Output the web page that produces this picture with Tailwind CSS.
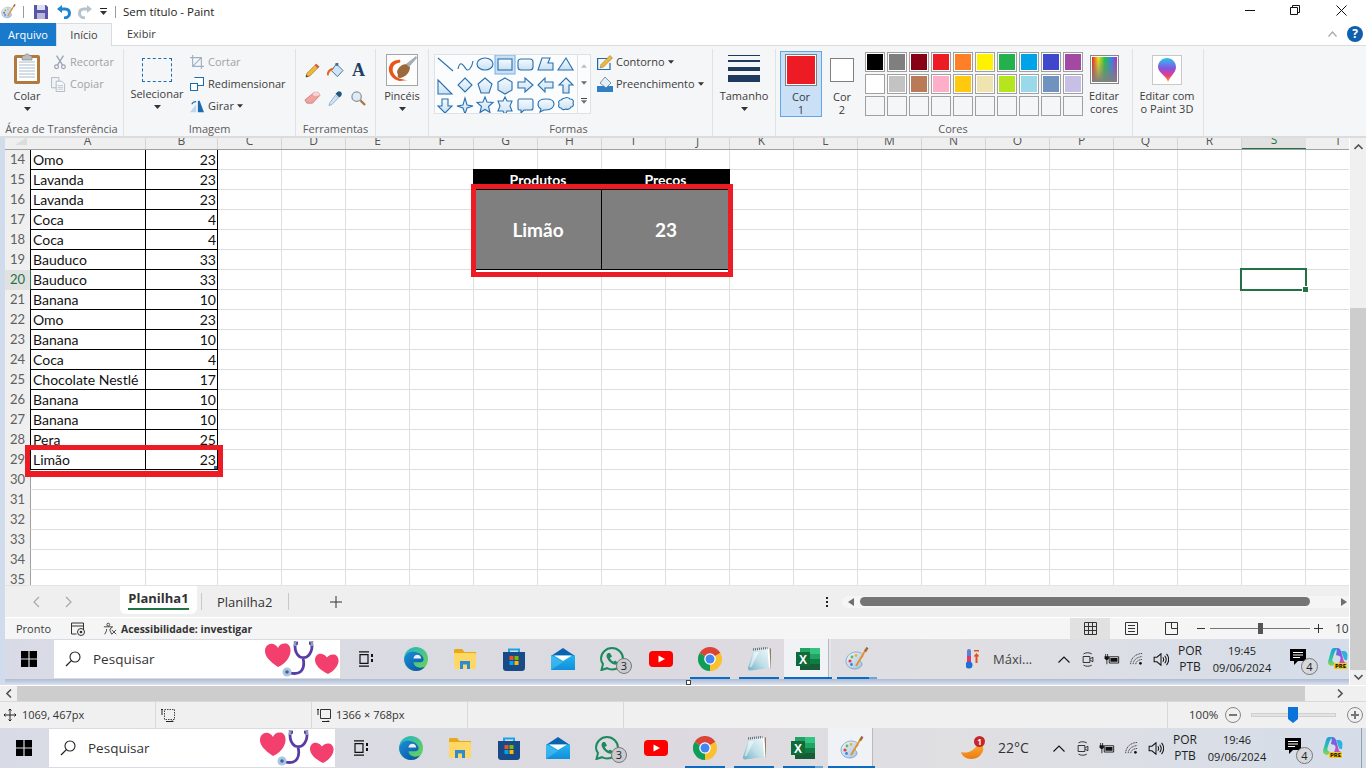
<!DOCTYPE html>
<html lang="pt-BR">
<head>
<meta charset="UTF-8">
<title>Sem título - Paint</title>
<script src="https://cdn.jsdelivr.net/npm/@tailwindcss/browser@4"></script>
</head>
<body class="w-[1366px] h-[768px] overflow-hidden flex flex-col bg-white text-[#3c3c3c] text-[11px] leading-[14px] font-['Open_Sans',sans-serif]">

<!-- icon sprites -->
<svg class="absolute w-0 h-0">
  <defs>
    <linearGradient id="gEdge" x1="0" y1="0" x2="1" y2="1"><stop offset="0" stop-color="#1fb3c8"/><stop offset="1" stop-color="#6fd64f"/></linearGradient>
    <linearGradient id="gEdge2" x1="0" y1="0" x2="1" y2="1"><stop offset="0" stop-color="#1a8fd8"/><stop offset="1" stop-color="#0c4f9c"/></linearGradient>
    <linearGradient id="gMail" x1="0" y1="0" x2="0" y2="1"><stop offset="0" stop-color="#26b3ee"/><stop offset="1" stop-color="#0f8fdc"/></linearGradient>
    <linearGradient id="gPal" x1="0" y1="0" x2="1" y2="1"><stop offset="0" stop-color="#eef5fb"/><stop offset="1" stop-color="#9fc3e4"/></linearGradient>
    <linearGradient id="gNote" x1="1" y1="0" x2="0" y2="1"><stop offset="0" stop-color="#eef7f9"/><stop offset=".5" stop-color="#c2e0e8"/><stop offset="1" stop-color="#6fb2c9"/></linearGradient>
    <linearGradient id="gSpec" x1="0" y1="0" x2="1" y2="0"><stop offset="0" stop-color="#e81c24"/><stop offset=".25" stop-color="#f5e611"/><stop offset=".5" stop-color="#27c43c"/><stop offset=".75" stop-color="#1f8ee8"/><stop offset="1" stop-color="#c026c8"/></linearGradient>
    <linearGradient id="gSpecD" x1="0" y1="0" x2="0" y2="1"><stop offset="0" stop-color="#808080" stop-opacity="0"/><stop offset="1" stop-color="#808080"/></linearGradient>
    <linearGradient id="g3d" x1="0" y1="0" x2="0" y2="1"><stop offset="0" stop-color="#27c4ee"/><stop offset=".45" stop-color="#8a4fe0"/><stop offset=".75" stop-color="#ee3f7a"/><stop offset="1" stop-color="#f7a11d"/></linearGradient>
    <linearGradient id="gCopA" x1="0" y1="0" x2="0" y2="1"><stop offset="0" stop-color="#1f9fe0"/><stop offset=".6" stop-color="#2fc4a0"/><stop offset="1" stop-color="#9ad54a"/></linearGradient>
    <linearGradient id="gCopB" x1="0" y1="0" x2="1" y2="1"><stop offset="0" stop-color="#3f7fe8"/><stop offset=".5" stop-color="#a04fd8"/><stop offset="1" stop-color="#ee5fa8"/></linearGradient>
    <linearGradient id="gSun" x1="0" y1="0" x2="0" y2="1"><stop offset="0" stop-color="#f9b233"/><stop offset="1" stop-color="#ee7a12"/></linearGradient>
    <linearGradient id="gFill" x1="0" y1="0" x2="0" y2="1"><stop offset="0" stop-color="#f7fbff"/><stop offset="1" stop-color="#c9e0f2"/></linearGradient>
    <symbol id="win" viewBox="0 0 16 16"><path fill="#000" d="M0 0h7.4v7.4H0zM8.6 0H16v7.4H8.6zM0 8.6h7.4V16H0zM8.6 8.6H16V16H8.6z"/></symbol>
    <symbol id="lens" viewBox="0 0 16 16"><circle cx="10" cy="6" r="5" fill="none" stroke="#222" stroke-width="1.1"/><path d="M6.4 9.6 1 15" stroke="#222" stroke-width="1.3"/></symbol>
    <symbol id="hearts" viewBox="0 0 75 38">
      <path fill="#f23f6d" d="M14 27C5 21 1 16 1 11 1 6 5 3 9 4c2 .5 4 2 5 4 1-3 4-5 8-4.400 3 .6 5 4 4.500 8C26 18 21 24 14 27z"/>
      <path fill="#f23f6d" d="M64 34C56 30 51 25 51 20c0-4 3-7 7-6 2 .4 4 2 5 3.500 1-2 4-3.500 7-3 3 .6 5 3.500 4.500 7C74 26 70 31 64 34z"/>
      <path fill="none" stroke="#5a3ca6" stroke-width="2.800" d="M34 3c-2 0-3 1-3 3 0 5 2 9 5 11 3 1 6 1 8-1 3-3 4-7 4-10 0-2-1-3-3-3M39 18c1 4 1 9-1 12-2 3-7 4-12 3"/>
      <circle cx="23" cy="32" r="4.500" fill="#a9c6e4"/><circle cx="23" cy="32" r="1.800" fill="#47648e"/>
      <path stroke="#8d9bb8" stroke-width="2.600" d="M31 1v5M48 1v5"/>
    </symbol>
    <symbol id="taskview" viewBox="0 0 16 16"><path fill="none" stroke="#111" stroke-width="1.200" d="M1 .8h10M1 15.200h10M2 3.600h8v8.800H2z"/><path fill="#111" d="M13 3h2v3h-2zM13 8h2v3h-2z"/></symbol>
    <symbol id="edge" viewBox="0 0 24 24">
      <circle cx="12" cy="12" r="12" fill="url(#gEdge)"/>
      <path fill="url(#gEdge2)" d="M.2 12.500C1 7 5 4.500 9.500 4.800c5 .3 9 3 10 6.700.5 2.500-1 3.800-3.500 3.800H9.500c.2 3.500 3.500 5.500 7 5.400 1.700 0 3.300-.5 4.500-1.200C18.800 22.800 15.500 24 12 24 5.500 24 .5 18.500.2 12.500z"/>
      <path fill="#fff" opacity=".9" d="M9.400 11.500c.2-2.300 2-3.800 4-3.800 2 0 3.700 1.400 3.800 3.800z"/>
    </symbol>
    <symbol id="folder" viewBox="0 0 22 20"><path fill="#e8a917" d="M0 1.500C0 .7.700 0 1.500 0H8l2.500 3H22v3H0z"/><path fill="#fdd866" d="M0 4h20.500c.8 0 1.500.7 1.500 1.500V18.500c0 .8-.7 1.500-1.500 1.500h-19C.7 20 0 19.300 0 18.500z"/><path fill="#2e8bd0" d="M6 12h10v8h-3v-4.500H9V20H6z"/></symbol>
    <symbol id="store" viewBox="0 0 24 24"><path fill="none" stroke="#1aa5e8" stroke-width="2" d="M7 6V2.500h10V6"/><path fill="#174a86" d="M1 5h22v16c0 1.700-1.300 3-3 3H4c-1.700 0-3-1.300-3-3z"/><path fill="#f25022" d="M7.500 9h4v4h-4z"/><path fill="#7fba00" d="M12.500 9h4v4h-4z"/><path fill="#00a4ef" d="M7.500 14h4v4h-4z"/><path fill="#ffb900" d="M12.500 14h4v4h-4z"/></symbol>
    <symbol id="mail" viewBox="0 0 24 22"><path fill="#0a63b0" d="M12 0 0 8h24z"/><path fill="url(#gMail)" d="M0 7.500h24V22H0z"/><path fill="#fff" d="M3 7.500h18L12 13z"/><path fill="#55c7f5" d="M0 7.500 12 14 0 22z" opacity=".5"/></symbol>
    <symbol id="wa" viewBox="0 0 24 24"><path fill="none" stroke="#1c8a5c" stroke-width="2" d="M1.500 23 3 17C1.800 15.300 1 13.600 1 11.700 1 6 6 1 12 1s11 5 11 10.700-5 10.800-11 10.800c-1.800 0-3.600-.5-5-1.300z"/><path fill="#1c8a5c" d="M8 6c-1.500 1-2 3-1 5 1.500 3 4 5.500 7 6.500 2 .5 3.500-.5 4-2l-3-2-1.500 1.200c-1.500-.7-3-2.200-3.700-3.700L12 9.500 10 6z"/></symbol>
    <symbol id="yt" viewBox="0 0 24 16"><rect width="24" height="16" rx="4" fill="#f00"/><path fill="#fff" d="m9.500 4.500 6.500 3.500-6.500 3.500z"/></symbol>
    <symbol id="chrome" viewBox="0 0 24 24">
      <path fill="#db4437" d="M12 12 1.600 6A12 12 0 0 1 22.400 6z"/><path fill="#0f9d58" d="M12 12 1.600 6A12 12 0 0 0 12 24z"/><path fill="#fbc02d" d="M12 12 22.400 6A12 12 0 0 1 12 24z"/>
      <circle cx="12" cy="12" r="5.800" fill="#fff"/><circle cx="12" cy="12" r="4.500" fill="#4285f4"/>
    </symbol>
    <symbol id="notepad" viewBox="0 0 24 24">
      <path fill="#8f7c60" d="M21 1l3 .5 0 19-1 .5z"/>
      <path fill="#fff" d="M20 1.500 22.500 1 23.500 20.500 21 21z"/>
      <path fill="url(#gNote)" d="M6 3 20.500 1.500 22 21 3 23.500c-1.500 0-2.500-1.500-2-3C3 15 5 9 6 3z"/>
      <path fill="none" stroke="#66707a" stroke-width="2.400" stroke-dasharray="1 1" d="M6 2.500 20.500 1"/>
      <path fill="#fff" opacity=".5" d="M7 5h5L4.500 20H2.500z"/>
    </symbol>
    <symbol id="excel" viewBox="0 0 24 22">
      <path fill="#21a366" d="M4 0h20v6H4z"/><path fill="#33c481" d="M14 0h10v6H14z"/><path fill="#21a366" d="M14 6h10v5H14z"/><path fill="#107c41" d="M4 6h10v5H4zM14 11h10v5H14z"/><path fill="#185c37" d="M4 11h10v11H4zM14 16h10v6H14z"/>
      <rect y="4" width="14" height="14" fill="#0f6b3a"/>
      <text x="3" y="15.500" font-family="Liberation Sans" font-weight="700" font-size="12" fill="#fff">X</text>
    </symbol>
    <symbol id="palette" viewBox="0 0 24 24">
      <path fill="url(#gPal)" stroke="#6e94b8" stroke-width=".7" d="M1 14c0-5 5-9 10-9 3 0 7 1 7 4 0 2-3 2-3 4s2 2 2 4c0 3-4 5-7 5-5 0-9-3-9-8z"/>
      <circle cx="5" cy="14" r="1.600" fill="#e8413a"/><circle cx="7" cy="10" r="1.400" fill="#6cba4a"/><circle cx="11" cy="8.500" r="1.400" fill="#f0b52d"/><circle cx="6.500" cy="17.500" r="1.400" fill="#3d86d6"/>
      <path stroke="#e89024" stroke-width="1.800" d="M11 19 20 4"/><path stroke="#a06a3c" stroke-width="2.400" d="M20 4.500 22.500 .5"/>
    </symbol>
    <symbol id="cam" viewBox="0 0 16 20"><path fill="none" stroke="#111" stroke-width="1.100" d="M2 2.500c3-2 8-2 11 0M2 17.500c3 2 8 2 11 0M1.500 6h9v8h-9zM11 9l3.500-2v6L11 11"/></symbol>
    <symbol id="batt" viewBox="0 0 20 14"><path fill="none" stroke="#111" stroke-width="1.100" d="M6.500 3.500h12v8h-12z"/><path fill="#111" d="M8 5h9v5H8zM1.500 0h1v3h-1zM4 0h1v3H4zM.5 3h5.500v3L4 8v5H3V8L.5 6z"/></symbol>
    <symbol id="wifi" viewBox="0 0 16 14"><path fill="none" stroke="#333" stroke-width="1" stroke-dasharray="1.500 .6" d="M.5 13C1 6 6 1 14 .5M3.500 13c.5-5 4-8 10.500-9M6.500 13c.5-3 2.500-5 7.500-5.500"/><circle cx="12" cy="12" r="1.600" fill="#111"/></symbol>
    <symbol id="spk" viewBox="0 0 16 14"><path fill="none" stroke="#111" stroke-width="1.100" d="M.6 4.500h3L8 .8v12.400L3.600 9.500h-3zM10 4.500c1 1.500 1 3.500 0 5M12 3c2 2.500 2 5.500 0 8M14 1c3 3.500 3 8.500 0 12"/></symbol>
    <symbol id="chat" viewBox="0 0 16 16"><path fill="#000" d="M0 0h16v12H8l-4 4v-4H0z"/><path stroke="#fff" d="M3 3.500h10M3 6h10M3 8.500h7"/></symbol>
    <symbol id="copilot" viewBox="0 0 20 18">
      <path fill="url(#gCopA)" d="M6 0h5c-3 1-4 3-5 6L4.500 11c-.6 2 .5 3.500 2.500 4-1 2-2 3-3 3-2.500 0-4.500-2-3.800-5L3 3C3.500 1 4.500 0 6 0z"/>
      <path fill="url(#gCopB)" d="M9 0c2 0 3.500 1 4 3l2.500 9c.5 2 1.500 3 3.500 3l-1 1c-1 1.500-2 2-3.500 2H7c3 0 4-2 4.500-4l1-3c.5-2-1-3.500-3-3.500L8 7c1-4 .5-6 1-7z" />
      <path fill="#2ab4e0" d="M13 3h3c2 0 3.500 2 3.500 4.500L19 12c-2 .5-3-.5-3.500-2.500z"/>
    </symbol>
    <symbol id="caret" viewBox="0 0 7 4"><path fill="#333" d="M0 0h7L3.500 4z"/></symbol>
    <symbol id="clip" viewBox="0 0 26 32"><rect y="3" width="26" height="29" rx="2" fill="#b2793e"/><rect x="3" y="6" width="20" height="23" fill="#fff"/><path stroke="#a9bcd0" d="M5 10h16M5 13h16M5 16h16M5 19h16M5 22h16M5 25h16"/><path fill="#bcbcbc" stroke="#777" stroke-width=".6" d="M8 5c0-1 1-1.500 2.500-1.500.5-2 4.500-2 5 0C17 3.500 18 4 18 5v3H8z"/></symbol>
    <symbol id="scis" viewBox="0 0 14 16"><path fill="none" stroke="#9aa5b5" stroke-width="1.600" d="M3 0l7 11M11 0 4 11"/><circle cx="3" cy="13" r="2.200" fill="none" stroke="#9aa5b5" stroke-width="1.400"/><circle cx="11" cy="13" r="2.200" fill="none" stroke="#9aa5b5" stroke-width="1.400"/></symbol>
    <symbol id="copy" viewBox="0 0 16 16"><path fill="#f0f3f6" stroke="#aeb7c2" d="M.5.500h8v11h-8z"/><path fill="#f7f9fb" stroke="#aeb7c2" d="M5.500 4.500h6l3 3v8h-9z"/><path stroke="#bcc6d0" d="M7 9h6M7 11h6M7 13h6"/></symbol>
    <symbol id="crop" viewBox="0 0 16 16"><path fill="none" stroke="#9fb0c4" stroke-width="1.300" d="M3 0v13h13M0 3h13v13M13 3 3 13"/></symbol>
    <symbol id="resize" viewBox="0 0 16 16"><path fill="#fff" stroke="#1e6cb0" stroke-width="1.200" d="M.6 7.500h8v8h-8zM5 .6h10.400v9H9"/></symbol>
    <symbol id="rot" viewBox="0 0 16 16"><path fill="#1e6cb0" d="M9 2h2l5 13H9z"/><path fill="#bcd8ef" d="M0 15 7 6v9z"/><path fill="none" stroke="#1e6cb0" stroke-width="1.200" d="M2 6c1-2 3-3 5-3"/></symbol>
    <symbol id="pencil" viewBox="0 0 16 16"><path fill="#f0b73a" stroke="#8d6a20" stroke-width=".6" d="M12 1l3 3L5 14l-4 1 1-4z"/><path fill="#d9534f" d="m12 1 3 3-1.500 1.500-3-3z"/><path fill="#333" d="m1 15 .5-2.500L3.500 14.500z"/></symbol>
    <symbol id="bucket" viewBox="0 0 18 16"><path fill="#cfe4f5" stroke="#3f6f9b" d="M10 1l7 7-6 6.500L4.500 8z"/><path fill="#3f6f9b" d="M9 0h3v3H9z"/><path fill="#e7641f" d="M0 13c-.5-4 2-8 8-8L5 8c-2 1-3 3-3.500 5.500z"/></symbol>
    <symbol id="eraser" viewBox="0 0 18 14"><path fill="#f2a3a0" stroke="#b56d6a" stroke-width=".7" d="M11 1h4l2 3-8 8.500H3L1 9z"/><path fill="#fbd6d4" d="M11 1h4l2 3-6 1-2-2z"/></symbol>
    <symbol id="dropper" viewBox="0 0 16 16"><path fill="#22577f" d="M10 1c1.500-1.500 4-.5 4.500 1s0 3-1.500 4l-1 1-4-4z"/><path fill="#cfe4f5" stroke="#6e94b8" stroke-width=".7" d="M8 4.500 11 7.500 4 14.500l-3 1 1-3z"/></symbol>
    <symbol id="mag" viewBox="0 0 16 16"><circle cx="6" cy="6" r="5" fill="#dcebf6" stroke="#8a8f96" stroke-width="1.300"/><path stroke="#a9783f" stroke-width="2.400" d="m10 10 5 5"/></symbol>
    <symbol id="brush" viewBox="0 0 32 32">
      <rect x=".5" y=".5" width="31" height="31" fill="#fdfdfd" stroke="#a6a6a6"/>
      <path fill="#e8561a" d="M12 6C6 6 2 11 3 17c1 5 5 9 11 10l8-1c-6 0-13-2-15-8-1-5 1-8 5-9 2 0 3-1 2-3-.5-.5-1-.5-2 0z"/>
      <path fill="#9a6a3a" d="M11 18c1-5 5-8 10-8l3 3c0 5-4 10-10 11-2 0-3-1-2-3z"/>
      <path fill="#a7adb5" d="M20 10 30 2l1 2-8 9z"/>
    </symbol>
    <symbol id="outline" viewBox="0 0 16 15"><path fill="none" stroke="#1e6cb0" stroke-width="1.200" d="M11 3.500H.6v11H13V8"/><path fill="#f0b73a" stroke="#8d6a20" stroke-width=".5" d="M13 .5l2.500 2.500-9 9L3 13l1-3.500z"/></symbol>
    <symbol id="fillico" viewBox="0 0 16 15"><path fill="#2f7fc2" d="M0 9h16v6H0z"/><path fill="#e3eef8" stroke="#506a84" stroke-width=".7" d="M8 0l6 6-5 5-6-5z"/></symbol>
    <symbol id="p3d" viewBox="0 0 18 24"><path fill="url(#g3d)" d="M9 0c5 0 9 4 9 9 0 6-6 9-8 15-1-6-10-9-10-15 0-5 4-9 9-9z"/></symbol>
    <symbol id="save" viewBox="0 0 14 14"><path fill="#5a54a8" d="M0 0h12l2 2v12H0z"/><path fill="#dcdff0" d="M3 0h8v5H3z"/><path fill="#b9b7d8" d="M3 8h8v6H3z"/></symbol>
    <symbol id="undo" viewBox="0 0 14 14"><path fill="none" stroke="#1c86d0" stroke-width="3" d="M3 4h5c3 0 4.500 2 4.500 4.500S10 13 7 13"/><path fill="#1c86d0" d="M5 0v8L0 4z"/></symbol>
    <symbol id="redo" viewBox="0 0 14 14"><path fill="none" stroke="#b6c4d1" stroke-width="3" d="M11 4H6C3 4 1.500 6 1.500 8.500S4 13 7 13"/><path fill="#b6c4d1" d="M9 0v8l5-4z"/></symbol>
    <symbol id="macro" viewBox="0 0 14 14"><path fill="none" stroke="#333" d="M.5 1h12v7M.5 1v11h5M.5 4h12"/><circle cx="10" cy="10" r="3.500" fill="none" stroke="#333"/><circle cx="10" cy="10" r="1.300" fill="#333"/></symbol>
    <symbol id="access" viewBox="0 0 16 14"><circle cx="6" cy="2" r="1.600" fill="none" stroke="#333"/><path fill="none" stroke="#333" d="M1 4.500h10L8 7v2l2 4M4 7v2l-2 4M10 8l5 5M15 8l-5 5"/></symbol>
    <symbol id="svMove" viewBox="0 0 12 12"><path fill="none" stroke="#222" d="M6 0v12M0 6h12M4.500 1.500 6 0l1.500 1.500M4.500 10.500 6 12l1.500-1.500M1.500 4.500 0 6l1.500 1.500M10.500 4.500 12 6l-1.500 1.500"/></symbol>
    <symbol id="svSel" viewBox="0 0 14 14"><path fill="none" stroke="#444" stroke-dasharray="1.500 1" d="M3.500 1.500h10v10h-10z"/><path stroke="#222" d="M1 1v6M0 2l1-1 1 1M5 13.500h7M11 12.500l1 1-1 1"/></symbol>
    <symbol id="svDim" viewBox="0 0 14 14"><path fill="none" stroke="#333" d="M3.500 1.500h10v9h-10z"/><path stroke="#222" d="M1 1v6M0 2l1-1 1 1M5 13.500h7M11 12.500l1 1-1 1"/></symbol>
  </defs>
</svg>

<!-- title bar -->
<div class="h-[23px] shrink-0 flex items-center relative">
  <svg class="w-[15px] h-[15px] ml-[1px]"><use href="#palette"/></svg>
  <div class="w-px h-[12px] bg-[#9a9a9a] ml-[7px]"></div>
  <svg class="w-[14px] h-[14px] ml-[10px]"><use href="#save"/></svg>
  <svg class="w-[14px] h-[14px] ml-[9px]"><use href="#undo"/></svg>
  <svg class="w-[14px] h-[14px] ml-[7px]"><use href="#redo"/></svg>
  <div class="ml-[8px] w-[7px] flex flex-col items-center"><div class="w-[7px] h-px bg-[#222] mb-[2px]"></div><svg class="w-[7px] h-[4px]"><use href="#caret"/></svg></div>
  <div class="w-px h-[12px] bg-[#9a9a9a] ml-[8px]"></div>
  <span class="ml-[7px] text-[#222] text-[11.5px]">Sem título - Paint</span>
  <div class="ml-auto flex items-center pb-[3px]">
    <div class="w-[10px] h-px bg-[#111] mr-[35px]"></div>
    <svg class="w-[10px] h-[10px] mr-[36px]" viewBox="0 0 10 10"><path fill="none" stroke="#111" d="M.5 2.500h7v7h-7zM2.500 2.500v-2h7v7h-2"/></svg>
    <svg class="w-[11px] h-[11px] mr-[19px]" viewBox="0 0 11 11"><path stroke="#111" d="M.5.500l10 10M10.500.500l-10 10"/></svg>
  </div>
</div>

<!-- ribbon tabs -->
<div class="h-[23px] shrink-0 flex border-b border-[#dadbdc] relative">
  <div class="w-[56px] h-[23px] bg-[#1979ca] text-white flex items-center justify-center">Arquivo</div>
  <div class="w-[56px] h-[23px] bg-[#f5f6f7] border-x border-t border-[#dadbdc] flex items-center justify-center">Início</div>
  <div class="ml-[15px] flex items-center h-[22px]">Exibir</div>
  <div class="ml-auto flex items-center h-[22px]">
    <svg class="w-[9px] h-[6px] mr-[10px]" viewBox="0 0 9 6"><path fill="none" stroke="#a8a8a8" stroke-width="1.200" d="M.5 5.500 4.500 1l4 4.500"/></svg>
    <div class="w-[16px] h-[16px] rounded-full bg-[#0f5fae] text-white font-bold text-[12px] flex items-center justify-center mr-[3px]">?</div>
  </div>
</div>

<!-- ribbon -->
<div class="h-[92px] shrink-0 flex bg-[#f5f6f7] border-b-2 border-[#dcdcdc] pt-[3px]">
  <!-- clipboard -->
  <section class="w-[124px] border-r border-[#e1e2e3] flex flex-col">
    <div class="flex-1 flex">
      <div class="w-[54px] flex flex-col items-center pt-[3px]">
        <svg class="w-[26px] h-[32px]"><use href="#clip"/></svg>
        <span class="mt-[5px]">Colar</span>
        <svg class="w-[7px] h-[4px] mt-[4px]"><use href="#caret"/></svg>
      </div>
      <div class="flex flex-col pt-[2px] text-[#a2a2a2]">
        <div class="h-[22px] flex items-center"><svg class="w-[12px] h-[15px] mr-[4px]"><use href="#scis"/></svg>Recortar</div>
        <div class="h-[22px] flex items-center -ml-[3px]"><svg class="w-[15px] h-[15px] mr-[4px]"><use href="#copy"/></svg>Copiar</div>
      </div>
    </div>
    <div class="h-[14px] text-center text-[#5c5c5c]">Área de Transferência</div>
  </section>
  <!-- image -->
  <section class="w-[172px] border-r border-[#e1e2e3] flex flex-col">
    <div class="flex-1 flex">
      <div class="w-[66px] flex flex-col items-center">
        <div class="w-[30px] h-[24px] mt-[9px] border border-dashed border-[#1e6cb0]"></div>
        <span class="mt-[5px]">Selecionar</span>
        <svg class="w-[7px] h-[4px] mt-[4px]"><use href="#caret"/></svg>
      </div>
      <div class="flex flex-col pt-[2px]">
        <div class="h-[22px] flex items-center text-[#a2a2a2]"><svg class="w-[14px] h-[14px] mr-[4px]"><use href="#crop"/></svg>Cortar</div>
        <div class="h-[22px] flex items-center"><svg class="w-[14px] h-[14px] mr-[4px]"><use href="#resize"/></svg>Redimensionar</div>
        <div class="h-[22px] flex items-center"><svg class="w-[14px] h-[14px] mr-[4px]"><use href="#rot"/></svg>Girar<svg class="w-[6px] h-[4px] ml-[3px]"><use href="#caret"/></svg></div>
      </div>
    </div>
    <div class="h-[14px] text-center text-[#5c5c5c]">Imagem</div>
  </section>
  <!-- tools -->
  <section class="w-[80px] border-r border-[#e1e2e3] flex flex-col">
    <div class="flex-1 pl-[5px] pt-[14px] grid grid-cols-[23px_23px_23px] grid-rows-[28px_28px] justify-items-center items-start content-start">
      <svg class="w-[15px] h-[15px]"><use href="#pencil"/></svg>
      <svg class="w-[17px] h-[15px]"><use href="#bucket"/></svg>
      <span class="font-['Liberation_Serif',serif] font-bold text-[18px] leading-[15px] text-[#1f3f66]">A</span>
      <svg class="w-[17px] h-[14px]"><use href="#eraser"/></svg>
      <svg class="w-[15px] h-[15px]"><use href="#dropper"/></svg>
      <svg class="w-[15px] h-[15px]"><use href="#mag"/></svg>
    </div>
    <div class="h-[14px] text-center text-[#5c5c5c]">Ferramentas</div>
  </section>
  <!-- brushes -->
  <section class="w-[53px] border-r border-[#e1e2e3] flex flex-col items-center pt-[5px]">
    <svg class="w-[32px] h-[32px]"><use href="#brush"/></svg>
    <span class="mt-[3px]">Pincéis</span>
    <svg class="w-[7px] h-[4px] mt-[4px]"><use href="#caret"/></svg>
  </section>
  <!-- shapes -->
  <section class="w-[284px] border-r border-[#e1e2e3] flex flex-col">
    <div class="flex-1 flex pl-[5px] pt-[5px]">
      <div class="h-[60px] w-[157px] border border-[#dfe1e3] bg-[#fafcfe] flex">
        <svg class="w-[142px] h-[58px]" viewBox="0 0 142 58" fill="url(#gFill)" stroke="#2a70ae" stroke-width="1.100">
          <rect x="60" y="0" width="20" height="19" fill="#c9e0f7" stroke="#7eb4ea"/>
          <path d="M3 3l15 13"/><path fill="none" d="M23 14c2-10 6-3 8 0s6-1 7-8"/><ellipse cx="50" cy="9" rx="8" ry="6"/><rect x="63" y="4" width="14" height="11"/><rect x="83" y="4" width="15" height="11" rx="3"/><path d="M107 3h8l-2 5h5v7h-15z"/><path d="m131 3 7 12h-15z"/>
          <path d="M3 25l14 14H3z"/><path d="m30 23 7 7-7 7-7-7z"/><path d="m50 23 7 6-3 9h-8l-3-9z"/><path d="m70 23 7 4v8l-7 4-7-4v-8z"/><path d="M83 27h7v-4l8 7-8 7v-4h-7z"/><path d="M118 27h-8v-4l-7 7 7 7v-4h8z"/><path d="m131 23 7 7h-4v8h-6v-8h-4z"/>
          <path d="M7 44h6v7h4l-7 7-7-7h4z"/><path d="m30 43 2 7 6 1-6 2-2 6-2-6-6-2 6-1z"/><path d="m50 42 2 5 6 .5-4.500 4 1.500 6-5-3-5 3 1.500-6-4.500-4 6-.5z"/><path d="m70 42 2 4h5l-2 5 2 5h-5l-2 4-2-4h-5l2-5-2-5h5z"/><path d="M84 44h13q1 0 1 2v7q0 2-2 2h-7l-3 3v-3h-2q-1 0-1-2v-7q0-2 1-2z"/><path d="M111 44c5 0 8 2 8 5s-3 6-8 6h-2l-4 2 1-3c-2-1-3-3-3-5 0-3 3-5 8-5z"/><path d="M130 43c2-1 4 0 5 1 3 0 4 2 3 4 1 2 0 4-2 4-1 2-3 3-5 2-2 1-4 1-5-1-2 0-3-2-2-4-1-2 0-4 2-4 1-1 2-2 4-2z"/>
        </svg>
        <div class="w-[13px] border-l border-[#dfe1e3] flex flex-col items-center justify-around py-[3px]">
          <svg class="w-[6px] h-[4px] rotate-180 opacity-30"><use href="#caret"/></svg>
          <svg class="w-[6px] h-[4px] opacity-70"><use href="#caret"/></svg>
          <div class="flex flex-col items-center"><div class="w-[6px] h-px bg-[#444] mb-px"></div><svg class="w-[6px] h-[4px] opacity-70"><use href="#caret"/></svg></div>
        </div>
      </div>
      <div class="flex flex-col ml-[6px] -mt-[3px]">
        <div class="h-[22px] flex items-center"><svg class="w-[16px] h-[15px] mr-[3px]"><use href="#outline"/></svg>Contorno<svg class="w-[6px] h-[4px] ml-[3px]"><use href="#caret"/></svg></div>
        <div class="h-[22px] flex items-center"><svg class="w-[16px] h-[15px] mr-[3px]"><use href="#fillico"/></svg>Preenchimento<svg class="w-[6px] h-[4px] ml-[3px]"><use href="#caret"/></svg></div>
      </div>
    </div>
    <div class="h-[14px] text-center text-[#5c5c5c] pr-[4px]">Formas</div>
  </section>
  <!-- size -->
  <section class="w-[63px] border-r border-[#e1e2e3] flex flex-col items-center pt-[6px]">
    <div class="w-[32px] flex flex-col"><div class="h-px bg-[#1f3a5f]"></div><div class="h-[2px] bg-[#1f3a5f] mt-[4px]"></div><div class="h-[4px] bg-[#1f3a5f] mt-[5px]"></div><div class="h-[7px] bg-[#1f3a5f] mt-[4px]"></div></div>
    <span class="mt-[7px]">Tamanho</span>
    <svg class="w-[7px] h-[4px] mt-[4px]"><use href="#caret"/></svg>
  </section>
  <!-- colours -->
  <section class="w-[357px] border-r border-[#e1e2e3] flex flex-col">
    <div class="flex-1 flex pl-[4px] pt-[2px]">
      <div class="w-[42px] h-[66px] bg-[#c9e0f7] border border-[#64a5e7] flex flex-col items-center pt-[2px] leading-[13px]">
        <div class="w-[32px] h-[32px] border border-[#808080] p-px bg-white"><div class="w-full h-full bg-[#ed1c24]"></div></div>
        <span class="mt-[4px]">Cor</span><span>1</span>
      </div>
      <div class="w-[40px] h-[66px] flex flex-col items-center leading-[13px]">
        <div class="w-[24px] h-[24px] mt-[7px] border border-[#808080] bg-white"></div>
        <span class="mt-[8px]">Cor</span><span>2</span>
      </div>
      <div class="ml-[3px] mt-px grid grid-cols-[repeat(10,20px)] grid-rows-[repeat(3,20px)] gap-[2px]">
        <div class="border border-[#a0a0a0] p-px bg-white"><div class="h-full bg-[#000000]"></div></div>
        <div class="border border-[#a0a0a0] p-px bg-white"><div class="h-full bg-[#7f7f7f]"></div></div>
        <div class="border border-[#a0a0a0] p-px bg-white"><div class="h-full bg-[#880015]"></div></div>
        <div class="border border-[#a0a0a0] p-px bg-white"><div class="h-full bg-[#ed1c24]"></div></div>
        <div class="border border-[#a0a0a0] p-px bg-white"><div class="h-full bg-[#ff7f27]"></div></div>
        <div class="border border-[#a0a0a0] p-px bg-white"><div class="h-full bg-[#fff200]"></div></div>
        <div class="border border-[#a0a0a0] p-px bg-white"><div class="h-full bg-[#22b14c]"></div></div>
        <div class="border border-[#a0a0a0] p-px bg-white"><div class="h-full bg-[#00a2e8]"></div></div>
        <div class="border border-[#a0a0a0] p-px bg-white"><div class="h-full bg-[#3f48cc]"></div></div>
        <div class="border border-[#a0a0a0] p-px bg-white"><div class="h-full bg-[#a349a4]"></div></div>
        <div class="border border-[#a0a0a0] p-px bg-white"><div class="h-full bg-[#ffffff]"></div></div>
        <div class="border border-[#a0a0a0] p-px bg-white"><div class="h-full bg-[#c3c3c3]"></div></div>
        <div class="border border-[#a0a0a0] p-px bg-white"><div class="h-full bg-[#b97a57]"></div></div>
        <div class="border border-[#a0a0a0] p-px bg-white"><div class="h-full bg-[#ffaec9]"></div></div>
        <div class="border border-[#a0a0a0] p-px bg-white"><div class="h-full bg-[#ffc90e]"></div></div>
        <div class="border border-[#a0a0a0] p-px bg-white"><div class="h-full bg-[#efe4b0]"></div></div>
        <div class="border border-[#a0a0a0] p-px bg-white"><div class="h-full bg-[#b5e61d]"></div></div>
        <div class="border border-[#a0a0a0] p-px bg-white"><div class="h-full bg-[#99d9ea]"></div></div>
        <div class="border border-[#a0a0a0] p-px bg-white"><div class="h-full bg-[#7092be]"></div></div>
        <div class="border border-[#a0a0a0] p-px bg-white"><div class="h-full bg-[#c8bfe7]"></div></div>
        <div class="border border-[#a0a0a0]"></div><div class="border border-[#a0a0a0]"></div><div class="border border-[#a0a0a0]"></div><div class="border border-[#a0a0a0]"></div><div class="border border-[#a0a0a0]"></div>
        <div class="border border-[#a0a0a0]"></div><div class="border border-[#a0a0a0]"></div><div class="border border-[#a0a0a0]"></div><div class="border border-[#a0a0a0]"></div><div class="border border-[#a0a0a0]"></div>
      </div>
      <div class="ml-[3px] w-[36px] flex flex-col items-center leading-[13px] pt-[4px]">
        <svg class="w-[29px] h-[29px]" viewBox="0 0 29 29"><rect x=".5" y=".5" width="28" height="28" fill="#fff" stroke="#888"/><rect x="2" y="2" width="25" height="25" fill="url(#gSpec)"/><rect x="2" y="2" width="25" height="25" fill="url(#gSpecD)"/></svg>
        <span class="mt-[5px]">Editar</span><span>cores</span>
      </div>
    </div>
    <div class="h-[14px] text-center text-[#5c5c5c] pr-[2px]">Cores</div>
  </section>
  <!-- paint 3d -->
  <section class="w-[71px] border-r border-[#e1e2e3] flex flex-col items-center pt-[6px] pr-[2px] leading-[13px] whitespace-nowrap">
    <div class="w-[30px] h-[30px] bg-white border border-[#c9c9c9] flex items-center justify-center"><svg class="w-[18px] h-[24px]"><use href="#p3d"/></svg></div>
    <span class="mt-[4px]">Editar com</span><span>o Paint 3D</span>
  </section>
</div>

<!-- canvas holding the pasted excel screenshot -->
<div class="h-[547px] shrink-0 flex bg-[#d0dbec]">
  <div class="w-[5px] shrink-0"></div>
  <div class="w-[1344px] shrink-0 flex flex-col">

    <!-- column headers, cut by the top of the canvas -->
    <div class="h-[12px] shrink-0 flex items-end overflow-hidden bg-[#efefef] border-b border-[#a0a0a0] text-[#555] text-[12px] leading-[20px]">
      <div class="w-[25px] h-[12px] shrink-0 relative"><svg class="absolute right-[3px] top-0 w-[12px] h-[8px]" viewBox="0 0 12 8"><path fill="#dcdcdc" d="M12 0v8H0z"/></svg></div>
      <div class="w-[116px] h-[20px] shrink-0 text-center translate-y-[2px] border-r border-[#d4d4d4]">A</div>
      <div class="w-[72px] h-[20px] shrink-0 text-center translate-y-[2px] border-r border-[#d4d4d4]">B</div>
      <div class="w-[64px] h-[20px] shrink-0 text-center translate-y-[2px] border-r border-[#d4d4d4]">C</div>
      <div class="w-[64px] h-[20px] shrink-0 text-center translate-y-[2px] border-r border-[#d4d4d4]">D</div>
      <div class="w-[64px] h-[20px] shrink-0 text-center translate-y-[2px] border-r border-[#d4d4d4]">E</div>
      <div class="w-[64px] h-[20px] shrink-0 text-center translate-y-[2px] border-r border-[#d4d4d4]">F</div>
      <div class="w-[64px] h-[20px] shrink-0 text-center translate-y-[2px] border-r border-[#d4d4d4]">G</div>
      <div class="w-[64px] h-[20px] shrink-0 text-center translate-y-[2px] border-r border-[#d4d4d4]">H</div>
      <div class="w-[64px] h-[20px] shrink-0 text-center translate-y-[2px] border-r border-[#d4d4d4]">I</div>
      <div class="w-[64px] h-[20px] shrink-0 text-center translate-y-[2px] border-r border-[#d4d4d4]">J</div>
      <div class="w-[64px] h-[20px] shrink-0 text-center translate-y-[2px] border-r border-[#d4d4d4]">K</div>
      <div class="w-[64px] h-[20px] shrink-0 text-center translate-y-[2px] border-r border-[#d4d4d4]">L</div>
      <div class="w-[64px] h-[20px] shrink-0 text-center translate-y-[2px] border-r border-[#d4d4d4]">M</div>
      <div class="w-[64px] h-[20px] shrink-0 text-center translate-y-[2px] border-r border-[#d4d4d4]">N</div>
      <div class="w-[64px] h-[20px] shrink-0 text-center translate-y-[2px] border-r border-[#d4d4d4]">O</div>
      <div class="w-[64px] h-[20px] shrink-0 text-center translate-y-[2px] border-r border-[#d4d4d4]">P</div>
      <div class="w-[64px] h-[20px] shrink-0 text-center translate-y-[2px] border-r border-[#d4d4d4]">Q</div>
      <div class="w-[64px] h-[20px] shrink-0 text-center translate-y-[2px] border-r border-[#d4d4d4]">R</div>
      <div class="w-[64px] h-[12px] shrink-0 text-center overflow-hidden bg-[#e1e1e1] border-b-2 border-[#217346] text-[#217346] -mb-px"><div class="-mt-[8px]">S</div></div>
      <div class="w-[64px] h-[20px] shrink-0 text-center translate-y-[2px]">T</div>
    </div>

    <!-- grid -->
    <div class="h-[435px] shrink-0 overflow-hidden flex relative bg-white font-[Lato,sans-serif] text-[14px] leading-[19px] text-[#111]">
      <div class="w-[213px] shrink-0 flex flex-col">
        <div class="h-5 shrink-0 flex"><div class="w-[25px] bg-[#efefef] text-[#5f5f5f] text-[13px] text-right pr-[5px]">14</div><div class="w-[116px] border-x border-b border-black pl-[2px]">Omo</div><div class="w-[72px] border-r border-b border-black text-right pr-[1px]">23</div></div>
        <div class="h-5 shrink-0 flex"><div class="w-[25px] bg-[#efefef] text-[#5f5f5f] text-[13px] text-right pr-[5px]">15</div><div class="w-[116px] border-x border-b border-black pl-[2px]">Lavanda</div><div class="w-[72px] border-r border-b border-black text-right pr-[1px]">23</div></div>
        <div class="h-5 shrink-0 flex"><div class="w-[25px] bg-[#efefef] text-[#5f5f5f] text-[13px] text-right pr-[5px]">16</div><div class="w-[116px] border-x border-b border-black pl-[2px]">Lavanda</div><div class="w-[72px] border-r border-b border-black text-right pr-[1px]">23</div></div>
        <div class="h-5 shrink-0 flex"><div class="w-[25px] bg-[#efefef] text-[#5f5f5f] text-[13px] text-right pr-[5px]">17</div><div class="w-[116px] border-x border-b border-black pl-[2px]">Coca</div><div class="w-[72px] border-r border-b border-black text-right pr-[1px]">4</div></div>
        <div class="h-5 shrink-0 flex"><div class="w-[25px] bg-[#efefef] text-[#5f5f5f] text-[13px] text-right pr-[5px]">18</div><div class="w-[116px] border-x border-b border-black pl-[2px]">Coca</div><div class="w-[72px] border-r border-b border-black text-right pr-[1px]">4</div></div>
        <div class="h-5 shrink-0 flex"><div class="w-[25px] bg-[#efefef] text-[#5f5f5f] text-[13px] text-right pr-[5px]">19</div><div class="w-[116px] border-x border-b border-black pl-[2px]">Bauduco</div><div class="w-[72px] border-r border-b border-black text-right pr-[1px]">33</div></div>
        <div class="h-5 shrink-0 flex"><div class="w-[25px] bg-[#e1e1e1] text-[#217346] text-[13px] text-right pr-[5px]">20</div><div class="w-[116px] border-x border-b border-black border-l-[#217346] pl-[2px]">Bauduco</div><div class="w-[72px] border-r border-b border-black text-right pr-[1px]">33</div></div>
        <div class="h-5 shrink-0 flex"><div class="w-[25px] bg-[#efefef] text-[#5f5f5f] text-[13px] text-right pr-[5px]">21</div><div class="w-[116px] border-x border-b border-black pl-[2px]">Banana</div><div class="w-[72px] border-r border-b border-black text-right pr-[1px]">10</div></div>
        <div class="h-5 shrink-0 flex"><div class="w-[25px] bg-[#efefef] text-[#5f5f5f] text-[13px] text-right pr-[5px]">22</div><div class="w-[116px] border-x border-b border-black pl-[2px]">Omo</div><div class="w-[72px] border-r border-b border-black text-right pr-[1px]">23</div></div>
        <div class="h-5 shrink-0 flex"><div class="w-[25px] bg-[#efefef] text-[#5f5f5f] text-[13px] text-right pr-[5px]">23</div><div class="w-[116px] border-x border-b border-black pl-[2px]">Banana</div><div class="w-[72px] border-r border-b border-black text-right pr-[1px]">10</div></div>
        <div class="h-5 shrink-0 flex"><div class="w-[25px] bg-[#efefef] text-[#5f5f5f] text-[13px] text-right pr-[5px]">24</div><div class="w-[116px] border-x border-b border-black pl-[2px]">Coca</div><div class="w-[72px] border-r border-b border-black text-right pr-[1px]">4</div></div>
        <div class="h-5 shrink-0 flex"><div class="w-[25px] bg-[#efefef] text-[#5f5f5f] text-[13px] text-right pr-[5px]">25</div><div class="w-[116px] border-x border-b border-black pl-[2px]">Chocolate Nestlé</div><div class="w-[72px] border-r border-b border-black text-right pr-[1px]">17</div></div>
        <div class="h-5 shrink-0 flex"><div class="w-[25px] bg-[#efefef] text-[#5f5f5f] text-[13px] text-right pr-[5px]">26</div><div class="w-[116px] border-x border-b border-black pl-[2px]">Banana</div><div class="w-[72px] border-r border-b border-black text-right pr-[1px]">10</div></div>
        <div class="h-5 shrink-0 flex"><div class="w-[25px] bg-[#efefef] text-[#5f5f5f] text-[13px] text-right pr-[5px]">27</div><div class="w-[116px] border-x border-b border-black pl-[2px]">Banana</div><div class="w-[72px] border-r border-b border-black text-right pr-[1px]">10</div></div>
        <div class="h-5 shrink-0 flex"><div class="w-[25px] bg-[#efefef] text-[#5f5f5f] text-[13px] text-right pr-[5px]">28</div><div class="w-[116px] border-x border-b border-black pl-[2px]">Pera</div><div class="w-[72px] border-r border-b border-black text-right pr-[1px]">25</div></div>
        <div class="h-5 shrink-0 flex"><div class="w-[25px] bg-[#efefef] text-[#5f5f5f] text-[13px] text-right pr-[5px]">29</div><div class="w-[116px] border-x border-b border-black pl-[2px]">Limão</div><div class="w-[72px] border-r border-b border-black text-right pr-[1px]">23</div></div>
        <div class="h-5 shrink-0 flex"><div class="w-[25px] bg-[#efefef] text-[#5f5f5f] text-[13px] text-right pr-[5px]">30</div><div class="w-[116px] border-x border-b border-[#dedede] border-l-[#a0a0a0]"></div><div class="w-[72px] border-r border-b border-[#dedede]"></div></div>
        <div class="h-5 shrink-0 flex"><div class="w-[25px] bg-[#efefef] text-[#5f5f5f] text-[13px] text-right pr-[5px]">31</div><div class="w-[116px] border-x border-b border-[#dedede] border-l-[#a0a0a0]"></div><div class="w-[72px] border-r border-b border-[#dedede]"></div></div>
        <div class="h-5 shrink-0 flex"><div class="w-[25px] bg-[#efefef] text-[#5f5f5f] text-[13px] text-right pr-[5px]">32</div><div class="w-[116px] border-x border-b border-[#dedede] border-l-[#a0a0a0]"></div><div class="w-[72px] border-r border-b border-[#dedede]"></div></div>
        <div class="h-5 shrink-0 flex"><div class="w-[25px] bg-[#efefef] text-[#5f5f5f] text-[13px] text-right pr-[5px]">33</div><div class="w-[116px] border-x border-b border-[#dedede] border-l-[#a0a0a0]"></div><div class="w-[72px] border-r border-b border-[#dedede]"></div></div>
        <div class="h-5 shrink-0 flex"><div class="w-[25px] bg-[#efefef] text-[#5f5f5f] text-[13px] text-right pr-[5px]">34</div><div class="w-[116px] border-x border-b border-[#dedede] border-l-[#a0a0a0]"></div><div class="w-[72px] border-r border-b border-[#dedede]"></div></div>
        <div class="h-5 shrink-0 flex"><div class="w-[25px] bg-[#efefef] text-[#5f5f5f] text-[13px] text-right pr-[5px]">35</div><div class="w-[116px] border-x border-b border-[#dedede] border-l-[#a0a0a0]"></div><div class="w-[72px] border-r border-b border-[#dedede]"></div></div>
      </div>
      <div class="flex-1 bg-[linear-gradient(to_right,transparent_63px,#dedede_63px),linear-gradient(to_bottom,transparent_19px,#dedede_19px)] bg-[size:64px_20px]"></div>

      <!-- things lying over the cells; offsets are from x=5, y=150 -->
      <div class="absolute left-[468px] top-[19px] w-[257px] h-[16px] bg-black text-white font-bold flex overflow-hidden pt-[1px]">
        <div class="w-[128px] text-center pl-[2px]">Produtos</div><div class="w-[129px] text-center">Preços</div>
      </div>
      <div class="absolute left-[466px] top-[34px] w-[262px] h-[93px] border-[5px] border-[#ed1c24] bg-white">
        <div class="h-[81px] bg-[#7f7f7f] border-y border-black flex text-white font-bold text-[19px]">
          <div class="w-[126px] border-r border-black flex items-center justify-center pr-px">Limão</div>
          <div class="flex-1 flex items-center justify-center pl-[2px]">23</div>
        </div>
      </div>
      <div class="absolute left-[20px] top-[295px] w-[198px] h-[32px] border-[5px] border-b-[6px] border-[#ed1c24]"></div>
      <div class="absolute left-[209px] top-[316px] w-[3px] h-[3px] bg-[#3f5fa0]"></div>
      <div class="absolute left-[1235px] top-[118px] w-[67px] h-[23px] border-2 border-[#217346]"></div>
      <div class="absolute left-[1298px] top-[137px] w-[5px] h-[5px] bg-[#217346] outline outline-white"></div>
    </div>

    <!-- sheet tabs -->
    <div class="h-[32px] shrink-0 flex items-center bg-[#efefef] border-t border-[#e3e3e3] relative text-[13px] text-[#333]">
      <svg class="w-[8px] h-[12px] ml-[27px]" viewBox="0 0 8 12"><path fill="none" stroke="#a8a8a8" stroke-width="1.200" d="M7 1 2 6l5 5"/></svg>
      <svg class="w-[8px] h-[12px] ml-[25px]" viewBox="0 0 8 12"><path fill="none" stroke="#a8a8a8" stroke-width="1.200" d="m1 1 5 5-5 5"/></svg>
      <div class="ml-[47px] w-[77px] h-[28px] -mt-[3px] bg-white rounded-b-md flex flex-col items-center pt-[2px] font-bold leading-[20px]">Planilha1<div class="w-[61px] h-[2px] bg-[#217346]"></div></div>
      <div class="w-px h-[17px] bg-[#c8c8c8] ml-[4px]"></div>
      <span class="ml-[15px] w-[57px]">Planilha2</span>
      <div class="w-px h-[17px] bg-[#c8c8c8] ml-[14px]"></div>
      <svg class="w-[12px] h-[12px] ml-[41px]" viewBox="0 0 12 12"><path stroke="#333" d="M6 0v12M0 6h12"/></svg>
      <div class="ml-[484px] flex flex-col gap-[2px]"><div class="w-[2px] h-[2px] bg-[#222]"></div><div class="w-[2px] h-[2px] bg-[#222]"></div><div class="w-[2px] h-[2px] bg-[#222]"></div></div>
      <div class="ml-[14px] flex-1 h-[12px] rounded-l-md bg-[#f5f5f5] flex items-center pl-[6px]">
        <div class="w-0 h-0 border-y-[4px] border-y-transparent border-r-[6px] border-r-[#6e6e6e]"></div>
        <div class="w-[450px] h-[9px] rounded-full bg-[#757575] ml-[6px]"></div>
        <div class="w-0 h-0 border-y-[4px] border-y-transparent border-l-[6px] border-l-[#6e6e6e] ml-[31px]"></div>
      </div>
    </div>

    <!-- excel status bar -->
    <div class="h-[22px] shrink-0 flex items-center bg-[#f5f5f5] border-t border-white text-[11px] overflow-hidden whitespace-nowrap">
      <span class="ml-[11px] w-[55px]">Pronto</span>
      <svg class="w-[14px] h-[14px]"><use href="#macro"/></svg>
      <svg class="w-[14px] h-[14px] ml-[18px]"><use href="#access"/></svg>
      <span class="ml-[4px] w-[131px] font-bold text-[#333] text-[10.4px]">Acessibilidade: investigar</span>
      <div class="w-[40px] h-[22px] ml-[818px] bg-[#e1e1e1] flex items-center justify-center"><svg class="w-[13px] h-[13px]" viewBox="0 0 13 13"><path fill="none" stroke="#333" d="M.5.500h12v12H.5zM4.500.500v12M8.500.500v12M.5 4.500h12M.5 8.500h12"/></svg></div>
      <svg class="w-[13px] h-[13px] ml-[15px]" viewBox="0 0 13 13"><path fill="none" stroke="#333" d="M.5.500h12v12H.5zM3 3.500h7M3 6.500h7M3 9.500h7"/></svg>
      <svg class="w-[13px] h-[13px] ml-[27px]" viewBox="0 0 13 13"><path fill="none" stroke="#333" d="M.5.500h12v12H.5zM6.500.500v6h6"/></svg>
      <div class="w-[8px] h-px bg-[#333] ml-[19px]"></div>
      <div class="w-[100px] h-px bg-[#777] ml-[5px] relative"><div class="absolute left-[48px] -top-[5px] w-[5px] h-[11px] bg-[#555]"></div></div>
      <svg class="w-[9px] h-[9px] ml-[4px]" viewBox="0 0 9 9"><path stroke="#333" d="M4.500 0v9M0 4.500h9"/></svg>
      <span class="ml-[12px] text-[12px]">10</span>
    </div>

    <!-- taskbar in the screenshot -->
    <div class="h-[40px] shrink-0 flex items-stretch bg-[linear-gradient(90deg,#d8dbe5,#dcdae0_50%,#e0dfe2_70%,#d5dde9)] overflow-hidden text-[#222] relative">
      <div class="w-[49px] shrink-0 flex items-center justify-center pr-px"><svg class="w-[16px] h-[16px]"><use href="#win"/></svg></div>
      <div class="w-[286px] shrink-0 my-px bg-white flex items-center pl-[11px] text-[13.5px]">
        <svg class="w-[16px] h-[16px]"><use href="#lens"/></svg><span class="ml-[12px] text-[#333]">Pesquisar</span>
        <svg class="w-[75px] h-[38px] ml-auto mr-[1px]"><use href="#hearts"/></svg>
      </div>
      <div class="w-[51px] shrink-0 flex items-center justify-center"><svg class="w-[16px] h-[16px]"><use href="#taskview"/></svg></div>
      <div class="w-[49px] shrink-0 flex items-center justify-center"><svg class="w-[24px] h-[24px]"><use href="#edge"/></svg></div>
      <div class="w-[49px] shrink-0 flex items-center justify-center"><svg class="w-[22px] h-[20px]"><use href="#folder"/></svg></div>
      <div class="w-[49px] shrink-0 flex items-center justify-center"><svg class="w-[24px] h-[24px]"><use href="#store"/></svg></div>
      <div class="w-[49px] shrink-0 flex items-center justify-center"><svg class="w-[24px] h-[22px]"><use href="#mail"/></svg></div>
      <div class="w-[49px] shrink-0 flex items-center justify-center relative"><svg class="w-[24px] h-[24px]"><use href="#wa"/></svg><div class="absolute left-[29px] top-[19px] w-[16px] h-[16px] rounded-full bg-[#c9cbd0] border border-[#777] text-[11px] leading-[14px] text-center">3</div></div>
      <div class="w-[49px] shrink-0 flex items-center justify-center"><svg class="w-[24px] h-[16px]"><use href="#yt"/></svg></div>
      <div class="w-[49px] shrink-0 flex items-center justify-center relative"><svg class="w-[24px] h-[24px]"><use href="#chrome"/></svg><div class="absolute bottom-0 left-[5px] w-[40px] h-[2px] bg-[#0a6cc4]"></div></div>
      <div class="w-[49px] shrink-0 flex items-center justify-center relative"><svg class="w-[24px] h-[24px]"><use href="#notepad"/></svg><div class="absolute bottom-0 left-[5px] w-[40px] h-[2px] bg-[#0a6cc4]"></div></div>
      <div class="w-[49px] shrink-0 flex items-center justify-center relative"><div class="absolute left-px top-0 bottom-0 w-[44px] bg-[#f1f2f5]"></div><div class="absolute left-[45px] top-0 bottom-0 w-[3px] border-l border-[#b8b9bc] bg-[#e4e5ea]"></div><svg class="w-[24px] h-[22px] relative"><use href="#excel"/></svg><div class="absolute bottom-0 left-px w-[48px] h-[2px] bg-[#0a6cc4]"></div></div>
      <div class="w-[49px] shrink-0 flex items-center justify-center relative"><svg class="w-[24px] h-[24px]"><use href="#palette"/></svg><div class="absolute bottom-0 left-[5px] w-[32px] h-[2px] bg-[#0a6cc4]"></div><div class="absolute bottom-0 left-[37px] w-[8px] h-[2px] bg-[#6aa6dc]"></div></div>
      <div class="w-[76px] shrink-0"></div>
      <div class="w-[95px] shrink-0 flex items-center pl-[9px] text-[13px]">
        <svg class="w-[13px] h-[21px]" viewBox="0 0 13 21"><rect x="1" y="0" width="4" height="14" rx="2" fill="#5b7fd6"/><rect x="1" y="7" width="4" height="7" fill="#e0386a"/><circle cx="3" cy="16" r="3.500" fill="#1f6fd8"/><path fill="#e2501a" d="M8 1h5v1.500H8zM10.500 4l3 3.500h-2V14h-2V7.500h-2z"/></svg>
        <span class="ml-[14px] text-[#444]">Máxi...</span>
      </div>
      <div class="w-[24px] shrink-0 flex items-center justify-center"><svg class="w-[12px] h-[7px]" viewBox="0 0 12 7"><path fill="none" stroke="#111" stroke-width="1.100" d="m.5 6.500 5.500-5.500 5.500 5.500"/></svg></div>
      <div class="w-[24px] shrink-0 flex items-center justify-center"><svg class="w-[12px] h-[15px]"><use href="#cam"/></svg></div>
      <div class="w-[24px] shrink-0 flex items-center justify-center"><svg class="w-[16px] h-[11px]"><use href="#batt"/></svg></div>
      <div class="w-[25px] shrink-0 flex items-center justify-center"><svg class="w-[14px] h-[12px]"><use href="#wifi"/></svg></div>
      <div class="w-[23px] shrink-0 flex items-center justify-center"><svg class="w-[16px] h-[13px]"><use href="#spk"/></svg></div>
      <div class="w-[36px] shrink-0 flex flex-col items-center justify-center text-[12px] leading-[16px]"><span>POR</span><span>PTB</span></div>
      <div class="w-[68px] shrink-0 flex flex-col items-center justify-center text-[11px] leading-[17px] whitespace-nowrap"><span>19:45</span><span>09/06/2024</span></div>
      <div class="w-[44px] shrink-0 flex items-center justify-center relative"><svg class="w-[16px] h-[16px] -mt-[4px]"><use href="#chat"/></svg><div class="absolute left-[25px] top-[19px] w-[17px] h-[17px] rounded-full bg-[#d6d8dc] border border-[#777] text-[11px] leading-[15px] text-center">4</div></div>
      <div class="w-[36px] shrink-0 flex items-center pl-[8px] relative"><svg class="w-[20px] h-[18px] shrink-0 -mt-[4px]"><use href="#copilot"/></svg><span class="absolute left-[14px] top-[24px] px-px bg-[#f7c81e] text-[6px] leading-[6px] font-bold text-black">PRE</span></div>
    </div>

    <!-- bottom edge of the pasted image -->
    <div class="h-[6px] shrink-0 bg-[linear-gradient(#aebbd3,#dbe3ef)] relative">
      <div class="absolute left-[681px] top-[1px] w-[5px] h-[5px] bg-white border border-[#444]"></div>
    </div>
  </div>
  <div class="w-px shrink-0 bg-white"></div>
  <!-- paint vertical scrollbar -->
  <div class="w-[16px] shrink-0 bg-[#f0f0f0] flex flex-col items-center">
    <svg class="w-[9px] h-[6px] mt-[6px]" viewBox="0 0 9 6"><path fill="none" stroke="#555" stroke-width="1.600" d="m.5 5 4-4 4 4"/></svg>
    <div class="w-full h-[362px] mt-[158px] bg-[#cdcdcd]"></div>
    <svg class="w-[9px] h-[6px] mt-[4px]" viewBox="0 0 9 6"><path fill="none" stroke="#555" stroke-width="1.600" d="m.5 1 4 4 4-4"/></svg>
  </div>
</div>

<!-- paint horizontal scrollbar -->
<div class="h-[16px] shrink-0 flex items-center bg-[#f0f0f0] border-t border-white">
  <div class="w-[17px] flex justify-center"><svg class="w-[6px] h-[9px]" viewBox="0 0 6 9"><path fill="none" stroke="#555" stroke-width="1.600" d="M5 .5 1 4.500l4 4"/></svg></div>
  <div class="w-[1288px] h-[15px] bg-[#cdcdcd]"></div>
  <svg class="w-[6px] h-[9px] ml-[32px]" viewBox="0 0 6 9"><path fill="none" stroke="#555" stroke-width="1.600" d="m1 .5 4 4-4 4"/></svg>
</div>

<!-- paint status bar -->
<div class="h-[27px] shrink-0 flex items-stretch bg-[#f0f0f0] border-t border-[#d9d9d9] text-[11px] text-[#333]">
  <div class="w-[156px] border-r border-[#d9d9d9] flex items-center pl-[4px]"><svg class="w-[12px] h-[12px] mr-[6px]"><use href="#svMove"/></svg>1069, 467px</div>
  <div class="w-[156px] border-r border-[#d9d9d9] flex items-center pl-[5px]"><svg class="w-[14px] h-[14px]"><use href="#svSel"/></svg></div>
  <div class="w-[156px] border-r border-[#d9d9d9] flex items-center pl-[5px]"><svg class="w-[14px] h-[14px] mr-[5px]"><use href="#svDim"/></svg>1366 × 768px</div>
  <div class="w-[156px] border-r border-[#d9d9d9]"></div>
  <div class="w-[544px] border-r border-[#d9d9d9]"></div>
  <div class="flex-1 flex items-center pl-[21px]">
    <span class="w-[29px] text-[11.5px]">100%</span>
    <div class="w-[16px] h-[16px] rounded-full border border-[#888] ml-[7px] flex items-center justify-center"><div class="w-[8px] h-[2px] bg-[#777]"></div></div>
    <div class="w-[85px] h-[4px] bg-[#e3e3e3] border border-[#d0d0d0] ml-[10px] relative"><div class="absolute left-[36px] -top-[7px] w-[10px] h-[12px] bg-[#0a74da]"></div><div class="absolute left-[36px] top-[5px] w-0 h-0 border-x-[5px] border-x-transparent border-t-[4px] border-t-[#0a74da]"></div></div>
    <div class="w-[16px] h-[16px] rounded-full border border-[#888] ml-[11px] flex items-center justify-center relative"><div class="w-[8px] h-[2px] bg-[#777]"></div><div class="absolute w-[2px] h-[8px] bg-[#777]"></div></div>
  </div>
</div>

<!-- desktop taskbar -->
<div class="h-[40px] shrink-0 flex items-stretch bg-[linear-gradient(90deg,#d8dbe5,#dcdae0_50%,#e0dfe2_70%,#d5dde9)] overflow-hidden text-[#222] relative">
  <div class="w-[49px] shrink-0 flex items-center justify-center pr-px"><svg class="w-[16px] h-[16px]"><use href="#win"/></svg></div>
  <div class="w-[286px] shrink-0 my-px bg-white flex items-center pl-[11px] text-[13.5px]">
    <svg class="w-[16px] h-[16px]"><use href="#lens"/></svg><span class="ml-[12px] text-[#333]">Pesquisar</span>
    <svg class="w-[75px] h-[38px] ml-auto mr-[1px]"><use href="#hearts"/></svg>
  </div>
  <div class="w-[51px] shrink-0 flex items-center justify-center"><svg class="w-[16px] h-[16px]"><use href="#taskview"/></svg></div>
  <div class="w-[49px] shrink-0 flex items-center justify-center"><svg class="w-[24px] h-[24px]"><use href="#edge"/></svg></div>
  <div class="w-[49px] shrink-0 flex items-center justify-center"><svg class="w-[22px] h-[20px]"><use href="#folder"/></svg></div>
  <div class="w-[49px] shrink-0 flex items-center justify-center"><svg class="w-[24px] h-[24px]"><use href="#store"/></svg></div>
  <div class="w-[49px] shrink-0 flex items-center justify-center"><svg class="w-[24px] h-[22px]"><use href="#mail"/></svg></div>
  <div class="w-[49px] shrink-0 flex items-center justify-center relative"><svg class="w-[24px] h-[24px]"><use href="#wa"/></svg><div class="absolute left-[29px] top-[19px] w-[16px] h-[16px] rounded-full bg-[#c9cbd0] border border-[#777] text-[11px] leading-[14px] text-center">3</div></div>
  <div class="w-[49px] shrink-0 flex items-center justify-center"><svg class="w-[24px] h-[16px]"><use href="#yt"/></svg></div>
  <div class="w-[49px] shrink-0 flex items-center justify-center relative"><svg class="w-[24px] h-[24px]"><use href="#chrome"/></svg><div class="absolute bottom-0 left-[5px] w-[40px] h-[2px] bg-[#0a6cc4]"></div></div>
  <div class="w-[49px] shrink-0 flex items-center justify-center relative"><svg class="w-[24px] h-[24px]"><use href="#notepad"/></svg><div class="absolute bottom-0 left-[5px] w-[40px] h-[2px] bg-[#0a6cc4]"></div></div>
  <div class="w-[49px] shrink-0 flex items-center justify-center relative"><svg class="w-[24px] h-[22px]"><use href="#excel"/></svg><div class="absolute bottom-0 left-[5px] w-[32px] h-[2px] bg-[#0a6cc4]"></div><div class="absolute bottom-0 left-[37px] w-[8px] h-[2px] bg-[#6aa6dc]"></div></div>
  <div class="w-[49px] shrink-0 flex items-center justify-center relative"><div class="absolute left-px top-0 bottom-0 w-[44px] bg-[#f1f2f5]"></div><div class="absolute left-[45px] top-0 bottom-0 w-px bg-[#b8b9bc]"></div><svg class="w-[24px] h-[24px] relative"><use href="#palette"/></svg><div class="absolute bottom-0 left-px w-[47px] h-[2px] bg-[#0a6cc4]"></div></div>
  <div class="w-[76px] shrink-0"></div>
  <div class="w-[95px] shrink-0 flex items-center pl-[8px] text-[14px] relative">
    <svg class="w-[24px] h-[18px] mt-[4px]" viewBox="0 0 24 18"><path fill="url(#gSun)" d="M1 11c6 2 14-1 17-9 5 1 6 5 5 8-2 5-6 8-12 8-5 0-9-3-10-7z"/></svg>
    <div class="absolute left-[22px] top-[8px] w-[11px] h-[11px] rounded-full bg-[#c8252b] text-white text-[8px] leading-[11px] text-center font-bold">1</div>
    <span class="ml-[14px] text-[#333]">22°C</span>
  </div>
  <div class="w-[24px] shrink-0 flex items-center justify-center"><svg class="w-[12px] h-[7px]" viewBox="0 0 12 7"><path fill="none" stroke="#111" stroke-width="1.100" d="m.5 6.500 5.500-5.500 5.500 5.500"/></svg></div>
  <div class="w-[24px] shrink-0 flex items-center justify-center"><svg class="w-[12px] h-[15px]"><use href="#cam"/></svg></div>
  <div class="w-[24px] shrink-0 flex items-center justify-center"><svg class="w-[16px] h-[11px]"><use href="#batt"/></svg></div>
  <div class="w-[25px] shrink-0 flex items-center justify-center"><svg class="w-[14px] h-[12px]"><use href="#wifi"/></svg></div>
  <div class="w-[23px] shrink-0 flex items-center justify-center"><svg class="w-[16px] h-[13px]"><use href="#spk"/></svg></div>
  <div class="w-[36px] shrink-0 flex flex-col items-center justify-center text-[12px] leading-[16px]"><span>POR</span><span>PTB</span></div>
  <div class="w-[68px] shrink-0 flex flex-col items-center justify-center text-[11px] leading-[17px] whitespace-nowrap"><span>19:46</span><span>09/06/2024</span></div>
  <div class="w-[44px] shrink-0 flex items-center justify-center relative"><svg class="w-[16px] h-[16px] -mt-[4px]"><use href="#chat"/></svg><div class="absolute left-[25px] top-[19px] w-[17px] h-[17px] rounded-full bg-[#d6d8dc] border border-[#777] text-[11px] leading-[15px] text-center">4</div></div>
  <div class="w-[36px] shrink-0 flex items-center pl-[8px] relative"><svg class="w-[20px] h-[18px] shrink-0 -mt-[4px]"><use href="#copilot"/></svg><span class="absolute left-[14px] top-[24px] px-px bg-[#f7c81e] text-[6px] leading-[6px] font-bold text-black">PRE</span></div>
  <div class="w-px shrink-0 bg-[#9aa0aa] ml-[10px]"></div>
</div>
</body>
</html>
